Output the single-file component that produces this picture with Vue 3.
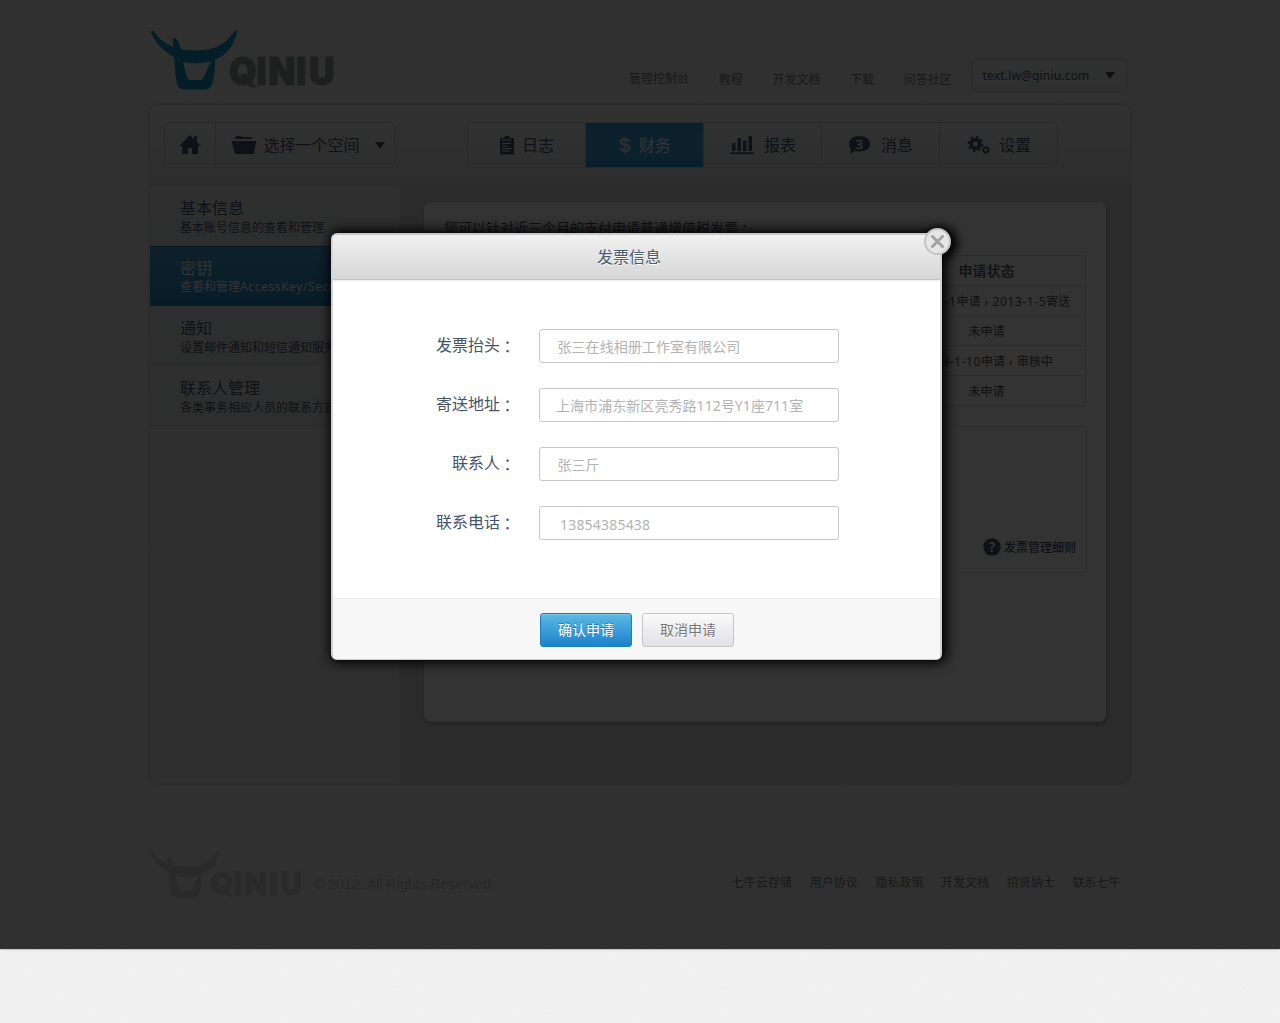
<script setup>
const topLinks = ['管理控制台', '教程', '开发文档', '下载', '问答社区']
const footLinks = ['七牛云存储', '用户协议', '隐私政策', '开发文档', '招贤纳士', '联系七牛']
const tabs = [
  { id: 'log', label: '日志' },
  { id: 'money', label: '财务', active: true },
  { id: 'chart', label: '报表' },
  { id: 'msg', label: '消息' },
  { id: 'set', label: '设置' },
]
const side = [
  { title: '基本信息', desc: '基本账号信息的查看和管理' },
  { title: '密钥', desc: '查看和管理AccessKey/SecretKey', active: true },
  { title: '通知', desc: '设置邮件通知和短信通知服务' },
  { title: '联系人管理', desc: '各类事务相应人员的联系方式' },
]
const states = ['2013-1-1申请，2013-1-5寄送', '未申请', '2013-1-10申请，审核中', '未申请']
const fields = [
  { label: '发票抬头', value: '张三在线相册工作室有限公司', pad: 17.5 },
  { label: '寄送地址', value: '上海市浦东新区亮秀路112号Y1座711室', pad: 16 },
  { label: '联系人', value: '张三斤', pad: 17.5 },
  { label: '联系电话', value: '13854385438', pad: 20, latin: true },
]

// Splits mixed text so that Latin runs and full-width punctuation can be styled apart.
function runs(text) {
  return text.split(/([，：]|[\w\-/]+)/).filter(Boolean).map((s) => ({
    s,
    cls: /[，：]/.test(s) ? 'punct' : /^[\w\-/]+$/.test(s) ? 'latin' : '',
  }))
}
</script>

<template>
  <div class="page">
    <svg class="grain" width="1280" height="1023">
      <filter id="noise"><feTurbulence type="fractalNoise" baseFrequency="0.7" numOctaves="2" /><feColorMatrix type="saturate" values="0" /></filter>
      <rect width="1280" height="1023" filter="url(#noise)" />
    </svg>
    <div class="wrap">
      <header class="top">
        <svg class="logo" width="190" height="64" viewBox="0 0 190 64">
          <g class="bull">
            <path d="M0.500 1H3.500C14 15 25 20 45 20.500C65 20 75 15 84.500 1H87.500C83 17 77 24 67 29C52 34 34 33 22 26C12 20 4 11 0.500 1Z" />
            <path d="M23 8C27 8 28 10 29 13L32 22L25 25C23 19 23 13 23 8Z" />
            <path fill-rule="evenodd" d="M24 26L65 28C65 38 65 45 62 54C61 58 58 59.500 54 59.500H36C31 59.500 28 58 27 54C25 46 25 36 24 26ZM33 32L37 47C38 49 39 50 41 50H50C52 50 53 49 54 47L58 37C59 34 61 32 64 31L52 33C45 34 39 33 33 32Z" />
          </g>
          <text transform="scale(.93 1)" x="85 114.300 127.200 157 171" y="54.600" class="wordmark">QINIU</text>
        </svg>
        <nav class="toplinks"><a v-for="l in topLinks" :key="l">{{ l }}</a></nav>
        <div class="account"><span>text.lw@qiniu.com</span><i class="caret"></i></div>
      </header>

      <main class="panel">
        <div class="toolbar">
          <div class="group space">
            <div class="home">
              <svg width="24" height="22" viewBox="0 0 24 22"><path d="M12 1L16 5V2H19V8L23 12H20V20H14V14H10V20H4V12H1Z" /></svg>
            </div>
            <div class="picker">
              <svg width="26" height="20" viewBox="0 0 26 20"><path d="M4 4V2L5 1H10L11 2H21V4ZM0.500 6H25.500L22.500 19H4Z" /></svg>
              <span>选择一个空间</span><i class="caret"></i>
            </div>
          </div>
          <div class="group tabs">
            <div v-for="t in tabs" :key="t.id" class="tab" :class="[t.id, { active: t.active }]">
              <svg v-if="t.id === 'log'" width="16" height="20" viewBox="0 0 16 20"><path d="M1 3H3V5.500H12V3H15V19.500H1ZM4 4.500V2.500H6V1H10V2.500H11.500V4.500Z" /><path d="M3 8.500H12M3 11H9M3 13.500H13M3 16H11" stroke="#f2f2f2" fill="none" /></svg>
              <b v-else-if="t.id === 'money'" class="dollar">$</b>
              <svg v-else-if="t.id === 'chart'" width="24" height="20" viewBox="0 0 24 20"><path d="M2 8H5.500V16H2ZM7.500 3H11V16H7.500ZM13 5.500H16.500V16H13ZM18.500 1H22V16H18.500ZM0 17.200H24V19H0Z" /></svg>
              <svg v-else-if="t.id === 'msg'" width="23" height="20" viewBox="0 0 23 20"><path d="M11.500 1C18 1 22 4.300 22 9S18 16.500 11 16.500L6 16C5 17.500 3.500 18.500 2 18.500C2.500 17 3 15 2.500 13.500C1.500 12 1 10.500 1 9C1 4.300 5 1 11.500 1Z" /><text x="11.500" y="13.700" text-anchor="middle" class="count">3</text></svg>
              <svg v-else width="24" height="20" viewBox="0 0 24 20">
                <circle cx="8.500" cy="9" r="4.300" fill="none" stroke="#4d5872" stroke-width="3.500" />
                <circle cx="8.500" cy="9" r="6.700" fill="none" stroke="#4d5872" stroke-width="2.400" stroke-dasharray="2.630 2.630" />
                <circle cx="18.800" cy="15" r="2.300" fill="none" stroke="#4d5872" stroke-width="1.700" />
                <circle cx="18.800" cy="15" r="3.500" fill="none" stroke="#4d5872" stroke-width="1.300" stroke-dasharray="1.370 1.370" />
              </svg>
              <span>{{ t.label }}</span>
            </div>
          </div>
        </div>
        <div class="body">
          <aside class="side">
            <div v-for="s in side" :key="s.title" class="item" :class="{ active: s.active }">
              <div class="t">{{ s.title }}</div>
              <div class="d"><span v-for="(r, k) in runs(s.desc)" :key="k" :class="r.cls">{{ r.s }}</span></div>
            </div>
          </aside>
          <section class="content">
            <div class="card">
              <p class="lead">您可以针对近三个月的支付申请普通增值税发票<span class="punct">：</span></p>
              <div class="table">
                <div class="row head"><div class="cell"></div><div class="cell state">申请状态</div></div>
                <div v-for="(s, i) in states" :key="i" class="row">
                  <div class="cell"></div>
                  <div class="cell state"><span v-for="(r, k) in runs(s)" :key="k" :class="r.cls">{{ r.s }}</span></div>
                </div>
              </div>
              <div class="rules">
                <svg width="18" height="18" viewBox="0 0 18 18"><circle cx="9" cy="9" r="8.700" fill="#49546c" /><text x="9" y="14" text-anchor="middle" class="qm">?</text></svg>
                <span>发票管理细则</span>
              </div>
            </div>
          </section>
        </div>
      </main>

      <footer class="foot">
        <svg width="154" height="52" viewBox="0 0 190 64" class="footlogo">
          <g class="bull">
            <path d="M0.500 1H3.500C14 15 25 20 45 20.500C65 20 75 15 84.500 1H87.500C83 17 77 24 67 29C52 34 34 33 22 26C12 20 4 11 0.500 1Z" />
            <path d="M23 8C27 8 28 10 29 13L32 22L25 25C23 19 23 13 23 8Z" />
            <path fill-rule="evenodd" d="M24 26L65 28C65 38 65 45 62 54C61 58 58 59.500 54 59.500H36C31 59.500 28 58 27 54C25 46 25 36 24 26ZM33 32L37 47C38 49 39 50 41 50H50C52 50 53 49 54 47L58 37C59 34 61 32 64 31L52 33C45 34 39 33 33 32Z" />
          </g>
          <text transform="scale(.95 1)" x="79.500 110 124 156 171" y="56" class="wordmark">QINIU</text>
        </svg>
        <span class="copy">© 2012. All Rights Reserved.</span>
        <nav class="footlinks"><a v-for="l in footLinks" :key="l">{{ l }}</a></nav>
      </footer>
    </div>

    <div class="overlay">
      <div class="modal">
        <div class="mhead">发票信息</div>
        <div class="mbody">
          <div v-for="f in fields" :key="f.label" class="field">
            <label>{{ f.label }}<span class="punct">：</span></label>
            <div class="input" :class="{ number: f.latin }" :style="{ paddingLeft: f.pad + 'px' }">{{ f.value }}</div>
          </div>
        </div>
        <div class="mfoot">
          <button class="btn primary">确认申请</button>
          <button class="btn">取消申请</button>
        </div>
        <div class="close">
          <svg width="13" height="13" viewBox="0 0 13 13"><path d="M1.500 1.500L11.500 11.500M11.500 1.500L1.500 11.500" stroke="#a3a3a3" stroke-width="3" stroke-linecap="round" /></svg>
        </div>
      </div>
    </div>
  </div>
</template>

<style>
body { margin: 0; background: #efefef; }
</style>

<style scoped>
* { box-sizing: border-box; }
.page { position: relative; height: 1023px; overflow: hidden; background: #f2f2f2; font-family: "Noto Sans", "Noto Sans CJK SC", sans-serif; font-size: 12px; color: #4d5872; }
.grain { position: absolute; left: 0; top: 0; opacity: .07; }
.wrap { position: relative; width: 982px; margin-left: 149px; }
.punct { display: inline-block; font-family: "Noto Sans CJK TC", sans-serif; line-height: 1; transform: translate(-.5px, 1.500px); }
.latin { letter-spacing: .6px; }
.top { height: 104px; display: flex; align-items: flex-start; }
.logo { margin: 30px 0 0 1px; display: block; flex: none; }
.bull { fill: #1494c8; }
.wordmark { font: 900 38px "Inter", sans-serif; fill: #989e9b; stroke: #989e9b; stroke-width: 1px; }
.toplinks { display: flex; gap: 29.700px; margin: 70px 0 0 289px; line-height: 20px; color: #7c7c7c; white-space: nowrap; }
.toplinks a:first-child { margin-top: -1px; }
.account { margin: 59px 0 0 19.700px; width: 155px; height: 33px; border: 1px solid #d0d3d8; border-radius: 6px; display: flex; align-items: center; justify-content: space-between; padding: 0 11px 0 10px; background: linear-gradient(#f6f6f6, #e8eaec); box-shadow: 0 0 3px #c4c4c4; color: #4a5468; flex: none; }
.account span { white-space: nowrap; letter-spacing: .18px; }
.caret { border: 5px solid transparent; border-top: 7px solid #454f66; border-bottom: 0; flex: none; }
.panel { height: 680px; border: 1px solid #cfcfcf; border-radius: 8px; overflow: hidden; box-shadow: 0 0 3px #c8c8c8; display: flex; flex-direction: column; }
.toolbar { height: 81px; flex: none; border-bottom: 1px solid #d0d0d0; background: linear-gradient(#f6f6f6 0%, #eeeeee 45%, #dfe1e4 100%); display: flex; padding: 17px 0 0 14px; }
.group { height: 46px; border: 1px solid #c9ccd2; border-radius: 6px; display: flex; background: linear-gradient(#f5f5f5, #e2e4e6); font-size: 16px; }
.group svg { fill: #4d5872; flex: none; display: block; }
.space { width: 231px; }
.home { width: 51px; border-right: 1px solid #c6c9ce; display: flex; align-items: center; justify-content: center; }
.picker { display: flex; align-items: center; padding-left: 15px; flex: 1; }
.picker span { margin-left: 6.500px; line-height: 44px; margin-top: -1px; }
.picker .caret { margin-left: 15.500px; }
.tabs { width: 591px; margin-left: 72px; }
.tab { width: 118px; flex: none; display: flex; align-items: center; padding-left: 31px; border-right: 1px solid #c6c9ce; line-height: 44px; }
.tab:last-child { border-right: 0; width: 117px; }
.tab span { margin-left: 7px; }
.tab.active { background: linear-gradient(#2e9bd6, #3ca4dd 20%, #3ca4dd 80%, #2b92cc); color: #fff; }
.tab.money { padding-left: 33px; }
.dollar { font: 700 21px "Liberation Sans", sans-serif; line-height: 44px; color: #e0e4e8; }
.tab.money span { margin-left: 8px; }
.tab.chart { padding-left: 26px; }
.tab.chart span { margin-left: 10px; }
.tab.msg { padding-left: 26px; }
.tab.msg span { margin-left: 10px; }
.tab.set { padding-left: 26.500px; }
.tab.set span { margin-left: 8.500px; }
.count { font: 400 13px "Open Sans", sans-serif; fill: #fff; stroke: #fff; stroke-width: .4px; }
.body { flex: 1; display: flex; }
.side { width: 249px; background: #eaeaea; }
.item { height: 60px; padding: 11px 0 0 30px; border-bottom: 1px solid #cdd0d0; border-top: 1px solid #f1f1f1; background: linear-gradient(#ededed, #dfe2e4); white-space: nowrap; overflow: hidden; }
.item .t { font-size: 16px; line-height: 20px; }
.item .d { line-height: 18px; margin-top: 1px; }
.item.active { background: linear-gradient(#46a4da, #258cc5); border-color: #2c86b8; color: #fff; }
.item.active .d { margin-top: 0; }
.content { flex: 1; background: #d8d8d8; padding: 16px 24px 0 25px; }
.card { width: 682px; height: 520px; background: #fcfcfc; border-radius: 7px; box-shadow: 1px 2px 4px #999; padding: 16px 20px 0; }
.lead { margin: 0; font-size: 14px; line-height: 20px; height: 20px; color: #4b5466; }
.table { margin-top: 17px; border: 1px solid #dadada; border-bottom: 0; }
.row { display: flex; height: 30px; line-height: 32px; border-bottom: 1px solid #dadada; color: #555; }
.cell { flex: 1; border-right: 1px solid #dadada; }
.cell.state { flex: none; width: 197px; text-align: center; white-space: nowrap; border-right: 0; }
.row.head { font-size: 14px; color: #4b5466; font-weight: 500; line-height: 30px; }
.rules { margin-top: 20px; height: 147px; width: 643px; border: 1px solid #e6e6e6; border-radius: 3px; display: flex; justify-content: flex-end; align-items: flex-start; padding: 111px 10px 0 0; gap: 3px; font-weight: 500; }
.rules span { line-height: 20px; }
.qm { font: 700 14px "Open Sans", sans-serif; fill: #efefef; }
.foot { margin-top: 51px; height: 100px; border-top: 1px solid #dedede; box-shadow: inset 0 1px #f8f8f8; display: flex; }
.footlogo { margin: 14px 0 0; flex: none; }
.footlogo .bull { fill: #d3d3d3; }
.footlogo .wordmark { fill: #d3d3d3; stroke: #d3d3d3; }
.copy { font: 14.150px/20px "Liberation Sans", sans-serif; color: #c0c0c0; margin: 38px 0 0 11px; white-space: nowrap; }
.footlinks { display: flex; gap: 17.700px; margin: 37px 10.500px 0 auto; line-height: 20px; color: #7c7c7c; white-space: nowrap; }
.overlay { position: absolute; z-index: 1; left: 0; top: 0; width: 1280px; height: 949px; background: rgba(0, 0, 0, .8); padding: 233px 0 0 331px; box-shadow: 0 0 2px #777; }
.modal { position: relative; width: 611px; height: 427px; border: 2px solid #c8c8c8; border-width: 2px 2px 1px; border-radius: 6px; background: #fff; border-left-color: #d2d2d2; border-right-color: #d2d2d2; box-shadow: 2px 0 12px 3px #000; display: flex; flex-direction: column; }
.modal::before { content: ""; position: absolute; z-index: -1; left: 591px; top: -7px; width: 27px; height: 27px; border-radius: 50%; box-shadow: 4px 1px 10px 2px #000; }
.mhead { height: 45px; background: linear-gradient(#f1f1f1, #d6d6d6); border-bottom: 1px solid #c2c2c2; box-shadow: 0 1px 1px #eee; text-align: center; font-size: 16px; line-height: 45px; padding-right: 15px; color: #4a5a70; text-shadow: 0 1px #fff; border-radius: 4px 4px 0 0; }
.mbody { height: 318px; padding-top: 49px; display: flex; flex-direction: column; gap: 25px; }
.field { display: flex; height: 34px; }
.field label { width: 183px; text-align: right; font-size: 16px; line-height: 33px; color: #44536b; white-space: nowrap; }
.input { margin-left: 23px; width: 300px; border: 1px solid #c8c8c8; border-radius: 3px; font-size: 14px; line-height: 33px; letter-spacing: .06px; color: #b3b3b3; white-space: nowrap; }
.input.number { line-height: 35px; letter-spacing: .2px; }
.mfoot { flex: 1; background: #f7f7f7; border-top: 1px solid #ececec; border-radius: 0 0 4px 4px; display: flex; gap: 10px; padding: 14px 0 0 207px; }
.btn { width: 92px; height: 34px; padding: 0; border: 1px solid #c6c6c9; border-radius: 3px; background: linear-gradient(#fbfbfb, #e0e0e6); font: 14px/32px "Noto Sans", "Noto Sans CJK SC", sans-serif; color: #777; text-shadow: 0 1px #fff; }
.btn.primary { border-color: #1b7dc3; background: linear-gradient(#5cbae6, #1c81cb); color: #fff; text-shadow: 0 -1px #2a7bb0; box-shadow: inset 0 1px #7cc8ec; }
.close { position: absolute; left: 591px; top: -7px; width: 27px; height: 27px; border: 2px solid #c3c3c3; border-radius: 50%; background: #e6e6e6; display: flex; align-items: center; justify-content: center; }
</style>
